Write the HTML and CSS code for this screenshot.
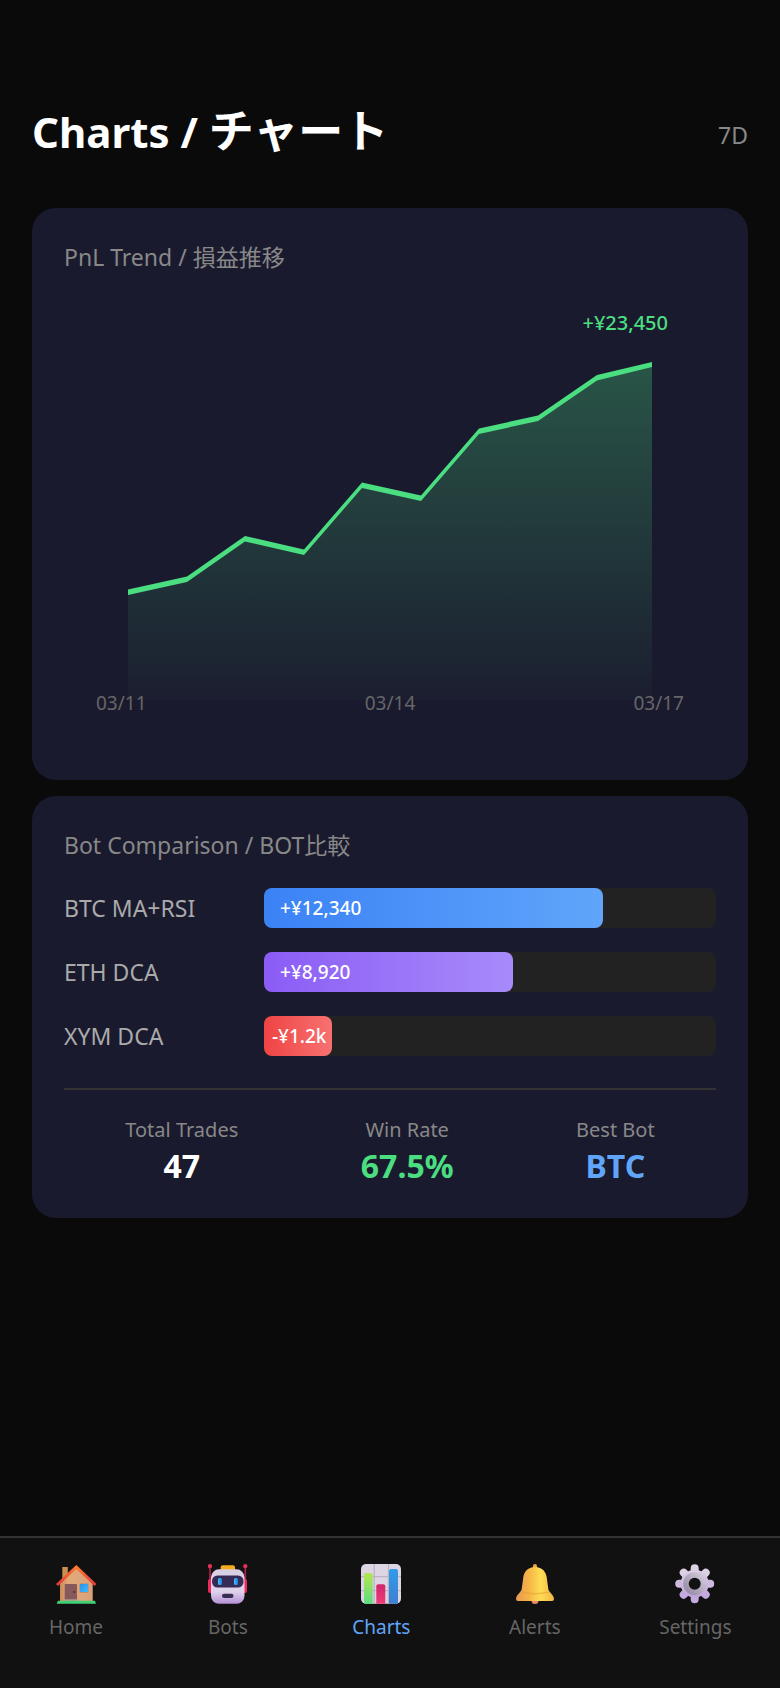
FILE: index.html
```html
<!DOCTYPE html>
<html lang="en">
<head>
<meta charset="utf-8">
<meta name="viewport" content="width=device-width, initial-scale=1">
<title>Charts / チャート</title>
<link rel="stylesheet" href="styles.css">
</head>
<body>
<div class="app">
  <header class="header">
    <h1 class="header-title">Charts / <span class="header-ja" lang="ja">チャート</span></h1>
    <span class="header-range">7D</span>
  </header>

  <main class="content">
    <section class="card">
      <h2 class="card-title">PnL Trend / <span lang="ja">損益推移</span></h2>
      <div class="chart">
        <p class="chart-value">+¥23,450</p>
        <svg class="chart-plot" viewBox="0 0 524 340" preserveAspectRatio="none" role="img" aria-label="PnL from 03/11 to 03/17">
          <defs>
            <linearGradient id="area" x1="0" y1="0" x2="0" y2="1">
              <stop offset="0" stop-color="#4ade80" stop-opacity=".3"/>
              <stop offset="1" stop-color="#4ade80" stop-opacity=".02"/>
            </linearGradient>
          </defs>
          <path fill="url(#area)" d="M0 232 59 219 117 178 176 192 234 125 293 138 351 71 410 58 469 17 524 4V340H0Z"/>
          <path fill="#4ade80" d="M0 229.500 59 216.500 117 176 176 189.500 234 122.500 293 135.500 351 68.500 410 55.500 469 15 524 2V7L469 20.500 410 61 351 74 293 141 234 128 176 195 117 181.500 59 222 0 235Z"/>
        </svg>
        <div class="chart-axis"><span>03/11</span><span>03/14</span><span>03/17</span></div>
      </div>
    </section>

    <section class="card">
      <h2 class="card-title">Bot Comparison / BOT<span lang="ja">比較</span></h2>
      <ul class="bars">
        <li class="bar-row"><span class="bar-name">BTC MA+RSI</span><div class="bar-track"><div class="bar-fill blue" style="width:75%">+¥12,340</div></div></li>
        <li class="bar-row"><span class="bar-name">ETH DCA</span><div class="bar-track"><div class="bar-fill purple" style="width:55%">+¥8,920</div></div></li>
        <li class="bar-row"><span class="bar-name">XYM DCA</span><div class="bar-track"><div class="bar-fill red" style="width:15%">-¥1.2k</div></div></li>
      </ul>
      <dl class="stats">
        <div class="stat"><dt>Total Trades</dt><dd>47</dd></div>
        <div class="stat"><dt>Win Rate</dt><dd class="positive">67.5%</dd></div>
        <div class="stat"><dt>Best Bot</dt><dd class="accent">BTC</dd></div>
      </dl>
    </section>
  </main>

  <nav class="tabs">
    <a class="tab" href="#home">
      <svg class="tab-icon" viewBox="0 0 40 40" aria-hidden="true">
        <defs>
          <linearGradient id="wall"><stop offset="0" stop-color="#c98a58"/><stop offset=".25" stop-color="#e2aa78"/><stop offset="1" stop-color="#d9a27c"/></linearGradient>
          <linearGradient id="roof" x1="0" y1="0" x2="0" y2="1"><stop offset="0" stop-color="#ff7a2e"/><stop offset="1" stop-color="#e03a3a"/></linearGradient>
          <linearGradient id="pane" x1="0" y1="0" x2="1" y2="1"><stop offset="0" stop-color="#2c93ea"/><stop offset="1" stop-color="#3fb9ff"/></linearGradient>
        </defs>
        <path fill="#c98f50" d="M6.300 3h5.500v16H6.300z"/>
        <path fill="url(#wall)" d="M4 18 20.300 3.500 36.700 18v19H4z"/>
        <path fill="none" stroke="url(#roof)" stroke-width="3" d="M1 21 20.300 3 39.500 21"/>
        <rect x="8.700" y="20" width="12.300" height="16" rx="1" fill="#87595a"/>
        <circle cx="18" cy="28" r="1" fill="#4c2d34"/>
        <path fill="#a99a9b" d="M8.500 35.300h13v1.500h-13z"/>
        <path fill="#b98467" d="M23.500 19.500h9v9.200h-9z"/>
        <path fill="url(#pane)" d="M24 20h8v8h-8z"/>
        <path fill="#43cf73" d="M2 36.700h37l1 3H.700z"/>
      </svg>
      <span>Home</span>
    </a>
    <a class="tab" href="#bots">
      <svg class="tab-icon" viewBox="0 0 40 40" aria-hidden="true">
        <defs>
          <linearGradient id="head" x1="0" y1="0" x2="0" y2="1"><stop offset="0" stop-color="#d9cfe2"/><stop offset=".65" stop-color="#dfd3ec"/><stop offset="1" stop-color="#b58fd6"/></linearGradient>
          <linearGradient id="eye"><stop offset="0" stop-color="#45c0ff"/><stop offset="1" stop-color="#1a7fd0"/></linearGradient>
        </defs>
        <path stroke="#b8204f" stroke-width="1.600" d="M2 3v14M37.300 3v14"/>
        <circle cx="2" cy="2.200" r="2.100" fill="#e8305c"/><circle cx="37.300" cy="2.200" r="2.100" fill="#e8305c"/>
        <rect x="0" y="15" width="6" height="14" rx="2" fill="#f0285c"/><rect x="33" y="15" width="6" height="14" rx="2" fill="#f0285c"/>
        <rect x="12.700" y="1.300" width="14.300" height="6" rx="2" fill="#f5ac18"/>
        <rect x="3" y="5.300" width="33.500" height="34.500" rx="8" fill="url(#head)"/>
        <rect x="4" y="11.500" width="31.500" height="12" rx="5.500" fill="#352b55"/>
        <rect x="10" y="14" width="4" height="7" rx="1.500" fill="url(#eye)"/><rect x="26" y="14" width="4" height="7" rx="1.500" fill="url(#eye)"/>
        <rect x="14" y="29.700" width="11.500" height="4.300" rx="2.100" fill="#3b2e55"/>
      </svg>
      <span>Bots</span>
    </a>
    <a class="tab active" href="#charts" aria-current="page">
      <svg class="tab-icon" viewBox="0 0 40 40" aria-hidden="true">
        <defs>
          <linearGradient id="bar-a" x1="0" y1="0" x2="0" y2="1"><stop offset="0" stop-color="#b4e650"/><stop offset="1" stop-color="#5cdc82"/></linearGradient>
          <linearGradient id="bar-b" x1="0" y1="0" x2="0" y2="1"><stop offset="0" stop-color="#d0266c"/><stop offset="1" stop-color="#f03c78"/></linearGradient>
          <linearGradient id="bar-c" x1="0" y1="0" x2="0" y2="1"><stop offset="0" stop-color="#2f9cea"/><stop offset="1" stop-color="#3f7fd0"/></linearGradient>
        </defs>
        <rect width="40" height="39.700" rx="5" fill="#ddd5e4"/>
        <path fill="none" stroke="#bdb3c4" stroke-width="1.300" d="M13.200 0v39.700M27.500 0v39.700M0 12.700h40M0 26.700h40"/>
        <path fill="url(#bar-a)" d="M3 39.700V11q0-2 2-2h4.700q2 0 2 2v28.700z"/>
        <path fill="url(#bar-b)" d="M15.300 39.700V22.300q0-2 2-2h5q2 0 2 2v17.400z"/>
        <path fill="url(#bar-c)" d="M28 39.700V7q0-2 2-2h5q2 0 2 2v32.700z"/>
      </svg>
      <span>Charts</span>
    </a>
    <a class="tab" href="#alerts">
      <svg class="tab-icon" viewBox="0 0 40 40" aria-hidden="true">
        <defs>
          <linearGradient id="bell"><stop offset="0" stop-color="#e99850"/><stop offset=".35" stop-color="#f5b646"/><stop offset=".65" stop-color="#ffdd55"/><stop offset="1" stop-color="#f5b545"/></linearGradient>
        </defs>
        <circle cx="20" cy="36.500" r="3.500" fill="#e88a64"/>
        <rect x="18" y="0" width="4" height="6" rx="2" fill="#f0a83a"/>
        <path fill="url(#bell)" d="M20 3C12.500 3 8.800 8 8.200 14L6.700 25C6.300 28 1 31 1 35q0 2 2 2h34q2 0 2-2c0-4-5.300-7-5.700-10l-1.500-11C31.200 8 27.500 3 20 3Z"/>
        <path fill="none" stroke="#e79a30" stroke-opacity=".5" stroke-width="1.500" d="M6 28q14 3.500 28 0"/>
      </svg>
      <span>Alerts</span>
    </a>
    <a class="tab" href="#settings">
      <svg class="tab-icon" viewBox="0 0 40 40" aria-hidden="true">
        <defs>
          <linearGradient id="gear" x1="0" y1="0" x2="0" y2="1"><stop offset="0" stop-color="#dcd0e4"/><stop offset="1" stop-color="#bfa3dc"/></linearGradient>
          <linearGradient id="ring" x1="1" y1="0" x2="0" y2="1"><stop offset="0" stop-color="#d2cad8"/><stop offset="1" stop-color="#948aa5"/></linearGradient>
        </defs>
        <g stroke-width="8" stroke-linecap="round">
          <path stroke="#ddd2e5" d="M19.700 4.200V15M30.700 8.700 24 15.500M8.700 8.700 15 15"/>
          <path stroke="#cdbadf" d="M4.200 19.700H14M35.200 19.700H25"/>
          <path stroke="#c3a9df" d="M8.700 30.700 15 24.500M30.700 30.700 24.500 24.500M19.700 35.200V25"/>
        </g>
        <circle cx="19.700" cy="19.700" r="14" fill="url(#gear)"/>
        <circle cx="19.700" cy="19.700" r="8.700" fill="none" stroke="url(#ring)" stroke-width="5.500"/>
        <circle cx="19.700" cy="19.700" r="6" fill="#111"/>
      </svg>
      <span>Settings</span>
    </a>
  </nav>
</div>
</body>
</html>
```
FILE: styles.css
```css
* { box-sizing: border-box; margin: 0; padding: 0; }

body {
  background: #0a0a0a;
  color: #fff;
  font-family: "Noto Sans", "Noto Sans CJK JP", sans-serif;
}

.app {
  display: flex;
  flex-direction: column;
  min-height: 100vh;
}

.header {
  display: flex;
  align-items: center;
  justify-content: space-between;
  padding: 102px 32px 46px;
}
.header-title { font-size: 42px; line-height: 60px; font-weight: 700; }
.header-ja { font-size: 45px; line-height: 1; }
.header-range { padding-top: 6px; font-size: 23px; line-height: 32px; color: #888; }

.content {
  display: flex;
  flex-direction: column;
  gap: 16px;
  padding: 0 32px 32px;
}

.card {
  background: #1a1a2e;
  border-radius: 24px;
  padding: 32px;
}
.card-title {
  font-size: 23px;
  line-height: 34px;
  font-weight: 400;
  color: #888;
}

.chart { padding: 35px 32px 31px; }
.chart-value {
  padding-right: 16px;
  text-align: right;
  font-size: 20px;
  line-height: 28px;
  font-weight: 500;
  color: #4ade80;
}
.chart-plot {
  display: block;
  width: calc(100% - 64px);
  height: 340px;
  margin: 23px 32px 0;
}
.chart-axis {
  display: flex;
  justify-content: space-between;
  margin-top: -11px;
  font-size: 19px;
  line-height: 28px;
  color: #666;
}

.bars {
  display: flex;
  flex-direction: column;
  gap: 24px;
  padding: 26px 0 32px;
  list-style: none;
}
.bar-row { display: flex; align-items: center; }
.bar-name { flex: 0 0 200px; font-size: 23px; line-height: 32px; color: #aaa; }
.bar-track {
  flex: 1;
  height: 40px;
  border-radius: 8px;
  background: #222;
}
.bar-fill {
  height: 40px;
  padding-left: 16px;
  border-radius: 8px;
  font-size: 19px;
  line-height: 40px;
  font-weight: 500;
  white-space: nowrap;
}
.blue { background: linear-gradient(90deg, #3b82f6, #60a5fa); }
.purple { background: linear-gradient(90deg, #8b5cf6, #a78bfa); }
.red { padding-left: 8px; background: linear-gradient(90deg, #ef4444, #f87171); }

.stats {
  display: flex;
  justify-content: space-around;
  padding-top: 24px;
  border-top: 2px solid #333;
}
.stat { text-align: center; }
.stat dt { font-size: 20px; line-height: 32px; color: #888; }
.stat dd { font-size: 32px; line-height: 40px; font-weight: 700; }
.stat .positive { color: #4ade80; }
.stat .accent { color: #60a5fa; }

.tabs {
  display: flex;
  justify-content: space-around;
  margin-top: auto;
  padding: 26px 0 47px;
  border-top: 2px solid #333;
  background: #111;
}
.tab {
  display: flex;
  flex-direction: column;
  align-items: center;
  gap: 9px;
  min-width: 55px;
  font-size: 19px;
  line-height: 28px;
  color: #666;
  text-decoration: none;
}
.tab.active { color: #60a5fa; }
.tab-icon { width: 40px; height: 40px; }
```
